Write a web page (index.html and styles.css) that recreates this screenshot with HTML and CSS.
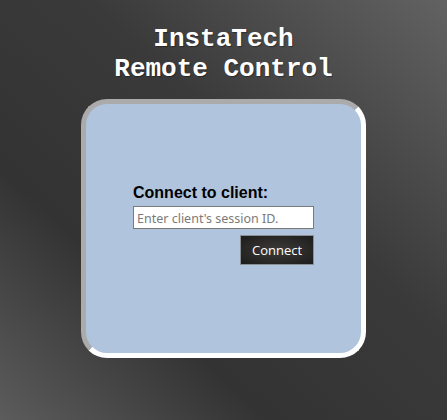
FILE: index.html
```html
<!DOCTYPE html>
<html>
<head>
<meta charset="utf-8">
<link rel="stylesheet" href="styles.css">
</head>
<body>
<h1 class="title">InstaTech<br>Remote Control</h1>
<div class="card">
  <div class="connect">
    <div class="label">Connect to client:</div>
    <input class="session" type="text" placeholder="Enter client's session ID.">
    <div class="actions"><button class="btn">Connect</button></div>
  </div>
</div>
</body>
</html>
```
FILE: styles.css
```css
html, body {
  margin: 0;
  padding: 0;
  height: 100%;
}
body {
  background: linear-gradient(to bottom left, #626262 0%, #3a3a3a 40%, #333333 70%, #5c5c5c 100%);
  overflow: hidden;
}
.title {
  margin: 0;
  padding-top: 24px;
  font-family: "Liberation Mono", "Courier New", monospace;
  font-weight: bold;
  font-size: 26px;
  line-height: 30px;
  color: #ffffff;
  text-align: center;
  text-shadow: 1px 1px 1px rgba(0,0,0,0.35);
}
.card {
  box-sizing: border-box;
  width: 285px;
  height: 259px;
  margin: 15px auto 0;
  border: 5px inset #ffffff;
  border-radius: 26px;
  background: #b0c4de;
  display: flex;
  align-items: center;
  justify-content: center;
}
.connect {
  width: 181px;
  margin-bottom: 9px;
}
.label {
  font-family: "Liberation Sans", Arial, sans-serif;
  font-weight: bold;
  font-size: 16px;
  line-height: 19px;
  color: #000;
  margin-bottom: 4px;
}
.session {
  box-sizing: border-box;
  display: block;
  width: 181px;
  height: 23px;
  margin: 0;
  padding: 1px 3px 0;
  border: 1px solid #7a7a7a;
  background: #fff;
  font-family: "Noto Sans", "Open Sans", sans-serif;
  font-size: 12.5px;
  outline: none;
}
.session::placeholder {
  color: #7a7a7a;
}
.actions {
  display: flex;
  justify-content: flex-end;
  margin-top: 6px;
}
.btn {
  box-sizing: border-box;
  width: 74px;
  height: 30px;
  margin: 0;
  border: 1px solid #8a8f96;
  background: radial-gradient(ellipse at center, #3c3a38 0%, #2a2928 60%, #1c1c1c 100%);
  color: #ffffff;
  font-family: "Open Sans", "Noto Sans", sans-serif;
  font-size: 13px;
  padding: 0;
}
```
